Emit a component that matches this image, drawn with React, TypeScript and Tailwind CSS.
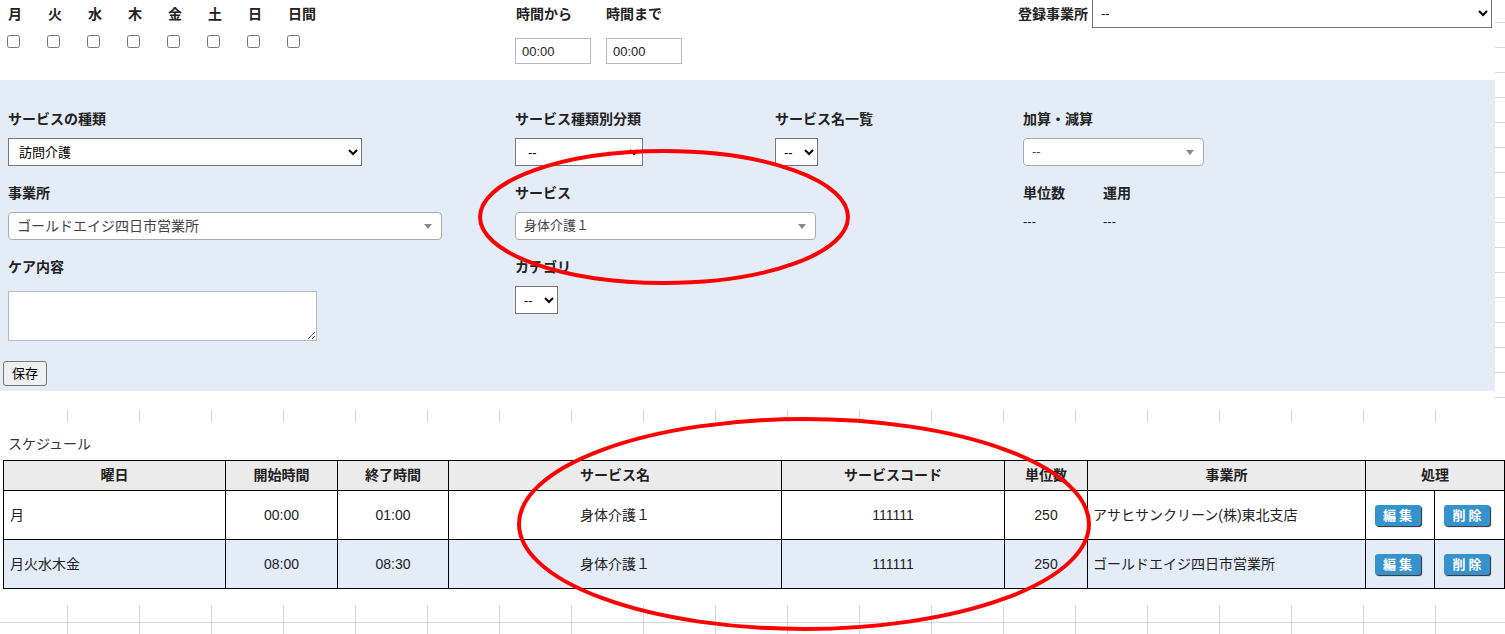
import React from "react";

const days = ["月", "火", "水", "木", "金", "土", "日", "日間"];

const font = { fontFamily: '"Liberation Sans", "Noto Sans CJK JP", sans-serif' };

function Select2({ text, className }: { text: string; className: string }) {
  return (
    <div
      className={`flex h-[28px] items-center justify-between rounded-[4px] border border-[#aaa] bg-white pl-2 pr-[9px] text-[13px] text-[#444] ${className}`}
    >
      <span>{text}</span>
      <span className="h-0 w-0 border-x-4 border-t-[5px] border-x-transparent border-t-[#888]" />
    </div>
  );
}

function NativeSelect({ text, className }: { text: string; className: string }) {
  return (
    <select
      defaultValue={text}
      className={`border border-[#767676] bg-white pl-1 text-[13px] text-black ${className}`}
    >
      <option value={text}>{text}</option>
    </select>
  );
}

function Label({ children, className = "" }: { children: React.ReactNode; className?: string }) {
  return <div className={`h-5 text-[14px] font-bold leading-5 text-[#222] ${className}`}>{children}</div>;
}

const rows = [
  { day: "月", start: "00:00", end: "01:00", office: "アサヒサンクリーン(株)東北支店", bg: "bg-white" },
  { day: "月火水木金", start: "08:00", end: "08:30", office: "ゴールドエイジ四日市営業所", bg: "bg-[#e4ecf7]" },
];

function ActionButton({ label }: { label: string }) {
  return (
    <button className="mr-[5px] h-[21px] w-[46px] rounded-[3px] bg-[#3692cd] pl-[3px] text-[13px] font-bold leading-[21px] tracking-[3px] text-white shadow-[1px_1px_1px_#2a2a2a]">
      {label}
    </button>
  );
}

export default function App() {
  return (
    <div
      style={font}
      className="relative h-[634px] w-[1505px] overflow-hidden bg-white text-[#222] [background-image:linear-gradient(to_right,#d6d6d6_1px,transparent_1px),linear-gradient(to_bottom,#d6d6d6_1px,transparent_1px)] [background-position:67px_22px] [background-size:72px_25px]"
    >
      {/* upper form area */}
      <div className="h-[410px] w-[1495px] bg-white">
        <div className="flex h-[80px]">
          <div className="ml-2 flex pt-1">
            {days.map((d) => (
              <div key={d} className="flex w-10 flex-col">
                <Label>{d}</Label>
                <input type="checkbox" className="mt-[11px] -ml-px h-[13px] w-[13px]" />
              </div>
            ))}
          </div>
          <div className="ml-[187px] flex pt-1">
            <div className="w-[91px]">
              <Label className="ml-px">時間から</Label>
              <input
                readOnly
                value="00:00"
                className="mt-[14px] h-[26px] w-[76px] border border-[#b8b8b8] bg-white px-[6px] text-[13px]"
              />
            </div>
            <div>
              <Label>時間まで</Label>
              <input
                readOnly
                value="00:00"
                className="mt-[14px] h-[26px] w-[76px] border border-[#b8b8b8] bg-white px-[6px] text-[13px]"
              />
            </div>
          </div>
          <div className="ml-[336px] flex items-start">
            <Label className="mt-1">登録事業所</Label>
            <NativeSelect text="--" className="-mt-px ml-1 h-[29px] w-[400px]" />
          </div>
        </div>

        <div className="h-[311px] bg-[#e4ecf7] pt-[29px]">
          <div className="flex">
            <div className="ml-2 flex w-[507px] flex-col">
              <Label>サービスの種類</Label>
              <NativeSelect text="訪問介護" className="mt-[9px] h-[28px] w-[354px] pl-[6px]" />
              <Label className="mt-[17px]">事業所</Label>
              <Select2 text="ゴールドエイジ四日市営業所" className="mt-[9px] w-[434px] text-[14px]" />
              <Label className="mt-[17px]">ケア内容</Label>
              <textarea className="mt-[14px] h-[50px] w-[309px] border border-[#b8b8b8] bg-white" />
            </div>
            <div className="flex w-[260px] flex-col">
              <Label>サービス種類別分類</Label>
              <NativeSelect text="--" className="mt-[9px] h-[28px] w-[128px] pl-[8px]" />
              <Label className="mt-[17px]">サービス</Label>
              <Select2 text="身体介護１" className="mt-[9px] w-[301px]" />
              <Label className="mt-[17px]">カテゴリ</Label>
              <NativeSelect text="--" className="mt-[9px] h-[28px] w-[43px]" />
            </div>
            <div className="flex w-[248px] flex-col">
              <Label>サービス名一覧</Label>
              <NativeSelect text="--" className="mt-[9px] h-[28px] w-[43px]" />
            </div>
            <div className="flex flex-col">
              <Label>加算・減算</Label>
              <Select2 text="--" className="mt-[9px] w-[181px]" />
              <div className="mt-[17px] flex">
                <div className="w-20">
                  <Label>単位数</Label>
                  <div className="mt-[9px] h-5 text-[13px] leading-5">---</div>
                </div>
                <div>
                  <Label>運用</Label>
                  <div className="mt-[9px] h-5 text-[13px] leading-5">---</div>
                </div>
              </div>
            </div>
          </div>
          <button className="ml-[3px] mt-[20px] h-[25px] rounded-[3px] border border-[#767676] bg-[#efefef] px-[8px] text-[13px] text-black">
            保存
          </button>
        </div>
      </div>

      {/* schedule */}
      <div className="mt-[12px] h-[183px] bg-white px-[3px] pt-[12px]">
        <div className="ml-[5px] h-5 text-[14px] leading-5 text-[#333]">スケジュール</div>
        <table className="mt-[6px] w-[1501px] table-fixed border-collapse text-[14px]">
          <colgroup>
            <col className="w-[222px]" />
            <col className="w-[112px]" />
            <col className="w-[111px]" />
            <col className="w-[333px]" />
            <col className="w-[223px]" />
            <col className="w-[83px]" />
            <col className="w-[278px]" />
            <col className="w-[69px]" />
            <col className="w-[70px]" />
          </colgroup>
          <thead>
            <tr className="h-[30px] bg-[#ebebeb]">
              {["曜日", "開始時間", "終了時間", "サービス名", "サービスコード", "単位数", "事業所"].map((h) => (
                <th key={h} className="border border-black font-bold">
                  {h}
                </th>
              ))}
              <th colSpan={2} className="border border-black font-bold">
                処理
              </th>
            </tr>
          </thead>
          <tbody>
            {rows.map((r) => (
              <tr key={r.day} className={`h-[49px] ${r.bg}`}>
                <td className="border border-black pl-[6px]">{r.day}</td>
                <td className="border border-black text-center">{r.start}</td>
                <td className="border border-black text-center">{r.end}</td>
                <td className="border border-black text-center">身体介護１</td>
                <td className="border border-black text-center">111111</td>
                <td className="border border-black text-center">250</td>
                <td className="border border-black pl-[5px]">{r.office}</td>
                <td className="border border-black text-center">
                  <ActionButton label="編集" />
                </td>
                <td className="border border-black text-center">
                  <ActionButton label="削除" />
                </td>
              </tr>
            ))}
          </tbody>
        </table>
      </div>

      {/* red annotation ellipses */}
      <svg className="pointer-events-none absolute left-0 top-0" width="1505" height="634">
        <ellipse cx="664" cy="217" rx="184" ry="66" fill="none" stroke="#f00" strokeWidth="4" />
        <ellipse cx="804" cy="524" rx="285" ry="105" fill="none" stroke="#f00" strokeWidth="4" />
      </svg>
    </div>
  );
}
